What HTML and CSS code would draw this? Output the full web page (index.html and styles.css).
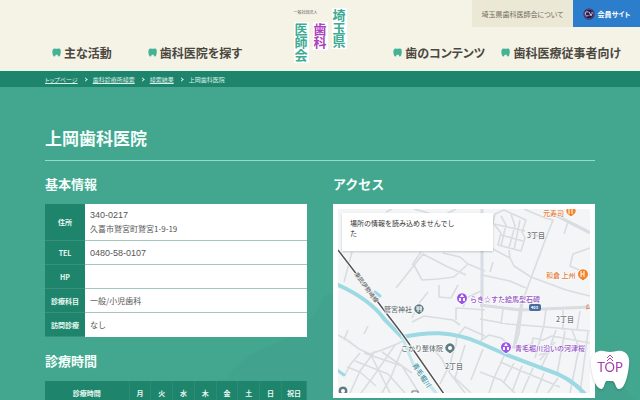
FILE: index.html
```html
<!DOCTYPE html>
<html lang="ja">
<head>
<meta charset="utf-8">
<meta name="viewport" content="width=device-width, initial-scale=1">
<title>上岡歯科医院 | 埼玉県歯科医師会</title>
<link rel="stylesheet" href="styles.css">
</head>
<body>
<svg class="defs" aria-hidden="true">
  <symbol id="tooth" viewBox="0 0 16 16"><path d="M4 1C6 .5 7 1.500 8 1.500S11 .5 13 1c2.500 1 3 4 2.500 7-.5 4-1 7-3.500 7-1.500 0-1.500-2-2-3H6.500c-.5 1-.5 3-2 3-2.500 0-3.300-3-3.800-7C.2 5 1.500 2 4 1z"/></symbol>
</svg>
<header class="header">
  <nav class="nav nav-left" aria-label="患者向け">
    <a href="#"><svg class="tooth"><use href="#tooth"/></svg>主な活動</a>
    <a href="#"><svg class="tooth"><use href="#tooth"/></svg>歯科医院を探す</a>
  </nav>
  <a class="logo" href="#">
    <span class="logo-col tall">埼玉県</span>
    <span class="logo-col accent">歯科</span>
    <span class="logo-col">医師会</span>
    <small class="logo-note">一般社団法人</small>
  </a>
  <div class="header-right">
    <div class="utility">
      <a class="about" href="#">埼玉県歯科医師会について</a>
      <a class="member" href="#"><svg class="emblem" viewBox="0 0 24 24"><circle cx="12" cy="12" r="11" fill="#241d4d"/><circle cx="12" cy="12" r="9.500" fill="none" stroke="#87517c" stroke-width="1.500"/><path d="M11 8c-5-2-7 1-6 5s4 4 6 1M12 8l5 8M13 14c4 1 6-1 5-6" fill="none" stroke="#d5cbe0" stroke-width="2"/></svg>会員サイト</a>
    </div>
    <nav class="nav nav-right" aria-label="コンテンツ">
      <a href="#"><svg class="tooth"><use href="#tooth"/></svg>歯のコンテンツ</a>
      <a href="#"><svg class="tooth"><use href="#tooth"/></svg>歯科医療従事者向け</a>
    </nav>
  </div>
</header>
<nav class="breadcrumb" aria-label="パンくず">
  <a href="#">トップページ</a><i class="chevron"></i>
  <a href="#">歯科診療所検索</a><i class="chevron"></i>
  <a href="#">検索結果</a><i class="chevron"></i>
  <span>上岡歯科医院</span>
</nav>
<main class="main">
  <svg class="backdrop" viewBox="0 0 640 313" preserveAspectRatio="none" aria-hidden="true"><path d="M185 313Q200 285 225 288Q245 262 270 255Q310 240 325 205L400 190Q520 180 600 270L640 313z"/></svg>
  <h1>上岡歯科医院</h1>
  <div class="columns">
    <div class="details">
      <section>
        <h2>基本情報</h2>
        <table class="info">
          <tr><th scope="row">住所</th><td><span class="number">340-0217</span><br>久喜市鷲宮町鷲宮1-9-19</td></tr>
          <tr><th scope="row">TEL</th><td><span class="number">0480-58-0107</span></td></tr>
          <tr><th scope="row">HP</th><td></td></tr>
          <tr><th scope="row">診療科目</th><td>一般/小児歯科</td></tr>
          <tr><th scope="row">訪問診療</th><td>なし</td></tr>
        </table>
      </section>
      <section>
        <h2>診療時間</h2>
        <table class="hours">
          <tr><th class="hours-label" scope="col">診療時間</th><th scope="col">月</th><th scope="col">火</th><th scope="col">水</th><th scope="col">木</th><th scope="col">金</th><th scope="col">土</th><th scope="col">日</th><th class="holiday" scope="col">祝日</th></tr>
        </table>
      </section>
    </div>
    <section class="access">
      <h2>アクセス</h2>
      <div class="map">
        <svg class="map-art" viewBox="338 209 252 184" role="img" aria-label="周辺地図">
          <rect x="338" y="209" width="252" height="184" fill="#f4f5f6"/>
          <g fill="none" stroke="#d9dce0" stroke-width="1.600" stroke-linejoin="round">
            <path d="M396 288L423 254L446 266L466 275M414 265L422 280L438 279L454 277L468 264M443 253L460 257L468 264M468 264L485 271M344 282L352 252M421 252L412 265M386 212L392 209M414 209L432 214M446 214L456 209"/>
            <path d="M524 209L545 218L553 220L546 238L531 278L523 300L519 334L514 348M555 214L590 232M568 222L564 234M590 248L573 254L570 266L590 275M545 238L528 233M491 248L510 258L514 266L531 277L566 290L590 296M482 275L510 281L526 288M510 258L509 250M493 262L490 272M482 263L482 300M482 305L482 340"/>
            <path d="M495 214L504 210L526 220L522 232L525 238L521 251L498 245L501 233L493 223zM501 216L506 225L501 246M511 214L515 226L509 248M520 220L514 250M494 224L525 231M501 235L523 241"/>
            <path d="M439 285V297L451 298L458 285M428 292L420 302L412 318M412 322L424 316L453 320L460 325M456 320L456 308L473 309L485 310M463 307L468 297L481 291M459 334L465 327L485 336M457 335L456 345L452 356L449 372L465 393M465 345L455 378L471 393M483 349L471 380M432 347L442 359L447 370L440 384"/>
            <path d="M338 335L347 340L359 349L370 354L382 350L397 344L407 339M348 330L344 340M364 334L368 326M360 353L350 365L345 375M347 367L360 372L376 386M355 361L388 374L405 393M364 353L402 366L419 393M371 355L390 393M382 352L412 373M403 347L391 377L382 393M395 345L373 377L361 393M375 351L360 371L350 393"/>
            <path d="M480 306L520 309M503 309L501 324M480 319L508 324L546 327L590 331M546 309L544 325L535 358M563 310V330M580 311L577 330M480 341L489 335L501 338L514 348L532 344L533 338L543 340L552 336L590 343M556 330L548 353L541 368M565 331L557 374M572 330L579 348L570 393M588 332L580 393M539 355L565 346M555 342L540 360M480 372L501 380L515 393M504 356L494 378L489 393M514 363L504 382M522 366L512 392M533 368L522 393M544 373L536 393M558 378L548 393M500 362L560 387"/>
            <path stroke-width="3" d="M480 305L520 310L590 307M523 295L514 349"/>
            <path stroke="#d6dde4" stroke-width="3" d="M553 214L590 233M482 209V306"/>
          </g>
          <g fill="none" stroke="#9cd9e3" stroke-linecap="round">
            <path stroke-width="4" d="M336 284Q370 299 385 320L402 337"/>
            <path stroke-width="4" d="M402 337C426 332 451 330 480 343L507 355L547 370Q570 377 585 394"/>
            <path stroke="#c0e8ed" stroke-width="3" d="M402 337L414 366L436 393"/>
            <path stroke-width="3" d="M337 370L344 375M375 292L380 296"/>
          </g>
          <path d="M338 250L361 280L403 335L444 394" fill="none" stroke="#fff" stroke-width="3"/>
          <path d="M338 250L361 280L403 335L444 394" fill="none" stroke="#555" stroke-width="1.500"/>
          <g class="map-label">
            <text x="527" y="238">3丁目</text><text x="445" y="369">2丁目</text><text x="556" y="322">2丁目</text>
            <text class="place" x="384" y="312">鷲宮神社</text><text class="place" x="401" y="351">こかり整体院</text>
            <text class="food" x="543" y="216">元寿司</text><text class="food" x="546" y="278">和倉 上州</text>
            <text class="purple" x="470" y="302">らき☆すた絵馬型石碑</text><text class="purple" x="515" y="351">青毛堀川沿いの河津桜</text>
            <text class="rail" transform="translate(354 274) rotate(54)">東武伊勢崎線</text>
            <text class="river" transform="translate(412 365) rotate(57)">青毛堀川</text>
          </g>
          <rect x="529" y="304" width="12" height="7" rx="2" fill="#476e9f"/><text class="route" x="531" y="309">403</text>
          <g stroke="#fff" stroke-width="1">
            <path fill="#5d7b80" d="M419 315l-4-3a5 5 0 1 1 8 0z"/><path fill="#5d7b80" d="M450 354l-4-3a5 5 0 1 1 8 0z"/>
            <path fill="#9c55e8" d="M462 305l-4-3a5.500 5.500 0 1 1 8 0z"/><path fill="#9c55e8" d="M506 354l-4-3a5.500 5.500 0 1 1 8 0z"/>
            <path fill="#f2842b" d="M571 217l-4-3a5 5 0 1 1 8 0z"/><path fill="#f2842b" d="M583 281l-4-3a5.500 5.500 0 1 1 8 0z"/><circle cx="343" cy="391" r="5" fill="#5d7b80"/>
          </g>
          <g fill="none" stroke="#fff"><path d="M416 307h6M416 309h6M418 307v5M421 307v5M581 271v6M584 271v6M581 274h3M569 209v5M572 209v5"/></g>
          <g fill="#fff"><circle cx="450" cy="348" r="2"/><circle cx="343" cy="391" r="2"/><path d="M462 294l2 3h-4zM459 298h2v3h-2zM463 298h2v3h-2zM506 343l2 3h-4zM503 347h2v3h-2zM507 347h2v3h-2z"/></g>
          <path d="M587 309v-4M589 305h-2M586 309l4-1" stroke="#dc8d5e" fill="none"/>
          <path d="M412 393v-2h6v2" stroke="#777" fill="none"/>
        </svg>
        <p class="map-notice">場所の情報を読み込めませんでした</p>
      </div>
    </section>
  </div>
</main>
<a class="top" href="#" aria-label="ページ上部へ">
  <svg class="top-art" viewBox="0 0 42 40"><path d="M10 1C15 0 17 2 21 2S28 0 33 1C39 3 41 8 40 15C39 25 36 39 30 39C26 39 27 31 23 31H18C15 31 16 39 12 39C6 38 3 25 2 16C1 8 3 3 10 1z" fill="#fff"/><path d="M18 8l3-3 3 3M18 11l3-3 3 3" fill="none" stroke="#a240ac"/></svg>
  <span class="top-text">TOP</span>
</a>
</body>
</html>
```
FILE: styles.css
```css
* { box-sizing: border-box; }

body {
  margin: 0;
  height: 100vh;
  display: flex;
  flex-direction: column;
  overflow: hidden;
  background: #43a68f;
  color: #555;
  font-family: "Noto Sans CJK JP", sans-serif;
  font-size: 8px;
}

a { color: inherit; text-decoration: none; }
h1, h2, p { margin: 0; }
.defs { position: absolute; width: 0; height: 0; }

.header {
  flex: none;
  display: grid;
  grid-template-columns: 1fr auto 1fr;
  height: 71px;
  background: #f5f2e6;
  border-bottom: 2px solid #eaf8ec;
}
.header, .breadcrumb { font-feature-settings: "palt"; }

.nav { display: flex; align-items: center; height: 18px; margin-bottom: 8px; color: #4a483f; font-size: 12px; font-weight: 700; }
.nav a { display: flex; align-items: center; gap: 3px; white-space: nowrap; }
.nav-left { align-self: end; gap: 36px; padding-left: 52px; }
.nav-right { justify-content: flex-end; gap: 16px; padding-right: 19px; }
.tooth { width: 9px; height: 9px; fill: #43b394; }

.logo { display: flex; flex-direction: row-reverse; align-items: flex-start; gap: 4px; padding-top: 8px; position: relative; }
.logo-col {
  writing-mode: vertical-rl;
  margin-top: 14px;
  padding: 1px 0;
  background: #fff;
  color: #3cab91;
  font-size: 13px;
  font-weight: 700;
  line-height: 15px;
}
.logo-col.tall { margin-top: 0; }
.logo-col.accent { color: #ac42bd; }
.logo-note { position: absolute; top: 9px; left: 0; color: #555; font-size: 4px; line-height: 6px; }

.header-right { display: flex; flex-direction: column; justify-content: space-between; }
.utility { display: flex; justify-content: flex-end; height: 27px; }
.utility a { display: flex; align-items: center; justify-content: center; gap: 3px; }
.about { width: 101px; background: #ece8d6; color: #706d61; font-size: 7px; }
.member { width: 67px; background: #2c7dcc; color: #fff; font-size: 7px; font-weight: 700; }
.emblem { width: 12px; height: 12px; }

.breadcrumb {
  flex: none;
  display: flex;
  align-items: center;
  gap: 6px;
  height: 16px;
  padding: 0 45px;
  background: #1e856c;
  color: #d9efe7;
  font-size: 6px;
}
.breadcrumb a { text-decoration: underline; }
.chevron { width: 3px; height: 3px; border: solid #d9efe7; border-width: 1px 1px 0 0; transform: rotate(45deg); }

.main { position: relative; flex: 1; padding: 0 45px; }
.backdrop { position: absolute; inset: 0; width: 100%; height: 100%; fill: #3f9f8b; opacity: 0.3; }
h1, .columns { position: relative; }
h1 {
  height: 74px;
  padding-top: 38px;
  border-bottom: 1px solid #8be0c7;
  color: #f4fffb;
  font-size: 17px;
  font-weight: 700;
  line-height: 26px;
}
h2 { color: #f4fffb; font-size: 13px; font-weight: 700; line-height: 20px; }

.columns { display: grid; grid-template-columns: 1fr 1fr; gap: 26px; padding-top: 13px; }
.details { display: flex; flex-direction: column; gap: 14px; }

table { width: 100%; margin-top: 10px; border-collapse: collapse; table-layout: fixed; }
th { padding: 0; background: #1e856c; color: #e8f8f2; font-size: 7px; font-weight: 700; line-height: 14px; text-align: center; }
td { padding: 4px 5px; background: #fff; line-height: 14px; }
.info tr { height: 24px; border-bottom: 1px solid #a3c9bf; }
.info tr:last-child { border-bottom: 0; }
.info th { width: 40px; border-bottom: 1px solid #37917b; }
.number { font-family: "Liberation Sans", sans-serif; font-size: 9px; }
.hours th { height: 24px; border-right: 1px solid #2b8d75; }
.hours .hours-label { width: 84px; }
.hours .holiday { width: 25px; }

.map { position: relative; margin-top: 10px; padding: 5px; background: #fff; }
.map-art { display: block; width: 100%; }
.map-notice {
  position: absolute;
  top: 9px;
  left: 9px;
  width: 151px;
  height: 38px;
  padding: 5px 36px 0 8px;
  background: #fff;
  box-shadow: 0 1px 2px #0003;
  color: #333;
  font-size: 7px;
  line-height: 10px;
}
.map-label { fill: #707478; font-size: 7px; font-weight: 500; paint-order: stroke; stroke: #fff; stroke-width: 1px; }
.place { fill: #697579; }
.food { fill: #df7b39; }
.purple { fill: #9154c6; }
.rail { fill: #666; font-size: 6px; }
.river { fill: #3d929f; }
.route { fill: #fff; font-size: 4px; font-weight: 700; }

.top { position: fixed; right: 9px; bottom: 10px; width: 42px; height: 40px; color: #a240ac; filter: drop-shadow(0 1px 1px #0003); }
.top-art { display: block; width: 100%; height: 100%; }
.top-text { position: absolute; top: 10px; left: 0; width: 100%; font-family: Lato, sans-serif; font-size: 13px; line-height: 14px; text-align: center; }
```
